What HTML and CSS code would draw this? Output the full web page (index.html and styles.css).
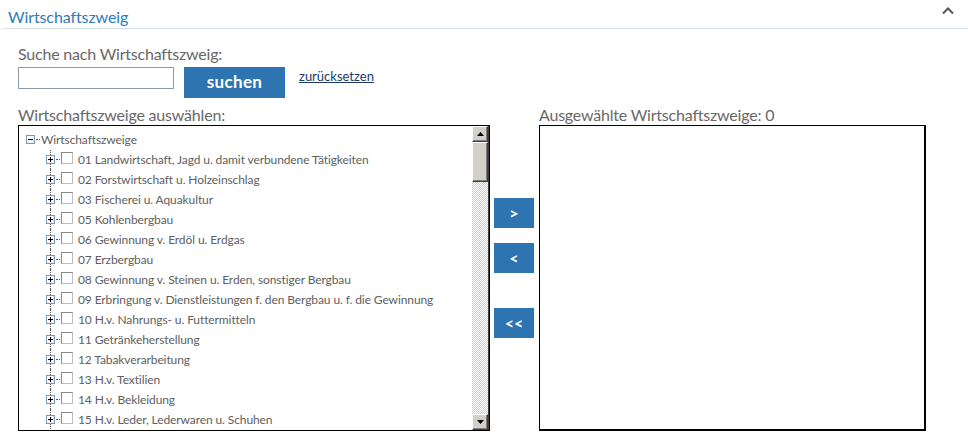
FILE: index.html
```html
<!DOCTYPE html>
<html lang="de">
<head>
<meta charset="utf-8">
<title>Wirtschaftszweig</title>
<link rel="stylesheet" href="styles.css">
</head>
<body>
<section class="panel">
  <header class="panel-head">
    <h2 class="panel-title">Wirtschaftszweig</h2>
    <svg class="chevron" width="14" height="10" viewBox="0 0 14 10"><path d="M2 7.5 L7 2.5 L12 7.5" fill="none" stroke="#555" stroke-width="2"/></svg>
  </header>
  <div class="panel-body">
    <div class="search">
      <label class="lbl" for="q">Suche nach Wirtschaftszweig:</label>
      <div class="search-row">
        <input id="q" class="search-input" type="text">
        <button class="btn-search">suchen</button>
        <a class="reset" href="#">zurücksetzen</a>
      </div>
    </div>
    <div class="chooser">
      <div class="col-left">
        <div class="lbl">Wirtschaftszweige auswählen:</div>
        <div class="treebox">
          <div class="tree">
            <div class="root"><span class="exp minus"></span><span class="hdots"></span><span class="root-text">Wirtschaftszweige</span></div>
            <ul class="items">
              <li><span class="vline"></span><span class="exp plus"></span><span class="hdots"></span><span class="cb"></span><span class="it">01 Landwirtschaft, Jagd u. damit verbundene Tätigkeiten</span></li>
              <li><span class="vline"></span><span class="exp plus"></span><span class="hdots"></span><span class="cb"></span><span class="it">02 Forstwirtschaft u. Holzeinschlag</span></li>
              <li><span class="vline"></span><span class="exp plus"></span><span class="hdots"></span><span class="cb"></span><span class="it">03 Fischerei u. Aquakultur</span></li>
              <li><span class="vline"></span><span class="exp plus"></span><span class="hdots"></span><span class="cb"></span><span class="it">05 Kohlenbergbau</span></li>
              <li><span class="vline"></span><span class="exp plus"></span><span class="hdots"></span><span class="cb"></span><span class="it">06 Gewinnung v. Erdöl u. Erdgas</span></li>
              <li><span class="vline"></span><span class="exp plus"></span><span class="hdots"></span><span class="cb"></span><span class="it">07 Erzbergbau</span></li>
              <li><span class="vline"></span><span class="exp plus"></span><span class="hdots"></span><span class="cb"></span><span class="it">08 Gewinnung v. Steinen u. Erden, sonstiger Bergbau</span></li>
              <li><span class="vline"></span><span class="exp plus"></span><span class="hdots"></span><span class="cb"></span><span class="it">09 Erbringung v. Dienstleistungen f. den Bergbau u. f. die Gewinnung</span></li>
              <li><span class="vline"></span><span class="exp plus"></span><span class="hdots"></span><span class="cb"></span><span class="it">10 H.v. Nahrungs- u. Futtermitteln</span></li>
              <li><span class="vline"></span><span class="exp plus"></span><span class="hdots"></span><span class="cb"></span><span class="it">11 Getränkeherstellung</span></li>
              <li><span class="vline"></span><span class="exp plus"></span><span class="hdots"></span><span class="cb"></span><span class="it">12 Tabakverarbeitung</span></li>
              <li><span class="vline"></span><span class="exp plus"></span><span class="hdots"></span><span class="cb"></span><span class="it">13 H.v. Textilien</span></li>
              <li><span class="vline"></span><span class="exp plus"></span><span class="hdots"></span><span class="cb"></span><span class="it">14 H.v. Bekleidung</span></li>
              <li class="last"><span class="vline"></span><span class="exp plus"></span><span class="hdots"></span><span class="cb"></span><span class="it">15 H.v. Leder, Lederwaren u. Schuhen</span></li>
            </ul>
          </div>
          <div class="sbar">
            <div class="sbtn"><svg width="7" height="4" viewBox="0 0 7 4"><path d="M0 4 L3.5 0 L7 4Z" fill="#000"/></svg></div>
            <div class="sthumb"></div>
            <div class="strack"></div>
            <div class="sbtn"><svg width="7" height="4" viewBox="0 0 7 4"><path d="M0 0 L3.5 4 L7 0Z" fill="#000"/></svg></div>
          </div>
        </div>
      </div>
      <div class="mid">
        <button class="mv mv-add">&gt;</button>
        <button class="mv mv-rem">&lt;</button>
        <button class="mv mv-all">&lt;&lt;</button>
      </div>
      <div class="col-right">
        <div class="lbl">Ausgewählte Wirtschaftszweige: 0</div>
        <div class="selbox"></div>
      </div>
    </div>
  </div>
</section>
</body>
</html>
```

FILE: styles.css
```css
html, body {
  margin: 0;
  padding: 0;
  background: #fff;
  font-family: "Lato", "Open Sans", sans-serif;
}

.panel {
  width: 968px;
  height: 438px;
  overflow: hidden;
}

.panel-head {
  display: flex;
  align-items: center;
  justify-content: space-between;
  height: 29px;
  margin-left: 3px;
  padding-left: 5px;
  padding-right: 13px;
  border-bottom: 1px solid #d5dde5;
  box-sizing: border-box;
}

.panel-title {
  margin: 0;
  font-weight: normal;
  font-size: 16px;
  color: #2f7ab9;
  letter-spacing: -0.1px;
  position: relative;
  top: 2px;
}

.chevron {
  display: block;
  margin-top: -6px;
}

.panel-body {
  padding: 15px 0 0 18px;
}

.lbl {
  font-size: 16px;
  color: #686868;
  line-height: 20px;
  letter-spacing: -0.2px;
  display: block;
}

.search-row {
  display: flex;
  align-items: flex-start;
  margin-top: 3px;
}

.search-input {
  width: 156px;
  height: 22px;
  box-sizing: border-box;
  border: 1px solid #8b9cb1;
  margin: 0;
  padding: 0 3px;
  font: 13px "Lato", sans-serif;
}

.btn-search {
  margin-left: 10px;
  width: 101px;
  height: 31px;
  border: 0;
  background: #2e74b0;
  color: #fff;
  font: bold 17px "Lato", sans-serif;
  letter-spacing: 0.3px;
  padding: 0 0 2px 0;
}

.reset {
  margin-left: 14px;
  margin-top: 1px;
  font: 13px "Lato", sans-serif;
  color: #1b3a6a;
  text-decoration: underline;
}

.chooser {
  display: flex;
  align-items: flex-start;
  margin-top: 7px;
}

.col-left .lbl {
  margin-bottom: 0;
}

.treebox {
  width: 472px;
  height: 306px;
  box-sizing: border-box;
  border: 1px solid #000;
  display: flex;
  overflow: hidden;
}

.tree {
  flex: 1;
  padding: 3px 0 0 7px;
  overflow: hidden;
  color: #606060;
  font-size: 12px;
}

.root {
  display: flex;
  align-items: center;
  height: 20px;
}

.root-text {
  margin-left: 1px;
  letter-spacing: -0.1px;
}

.exp {
  width: 9px;
  height: 9px;
  box-sizing: border-box;
  border: 1px solid #7a99b8;
  background: linear-gradient(135deg, #fff 0%, #e9eef4 100%);
  position: relative;
  flex: none;
}

.exp::before {
  content: "";
  position: absolute;
  left: 1px;
  top: 3px;
  width: 5px;
  height: 1px;
  background: #000;
}

.plus::after {
  content: "";
  position: absolute;
  left: 3px;
  top: 1px;
  width: 1px;
  height: 5px;
  background: #000;
}

.hdots {
  width: 4px;
  height: 0;
  border-top: 1px dotted #555;
  margin-left: 1px;
  flex: none;
}

.items {
  list-style: none;
  margin: 0;
  padding: 0 0 0 20px;
}

.items li {
  display: flex;
  align-items: center;
  height: 20px;
  position: relative;
  white-space: nowrap;
}

.vline {
  position: absolute;
  left: 4px;
  top: 0;
  bottom: 0;
  border-left: 1px dotted #555;
}

.items li:first-child .vline {
  top: 1px;
}

.items li.last .vline {
  bottom: -12px;
}

.items .exp {
  z-index: 1;
}

.cb {
  width: 12px;
  height: 12px;
  box-sizing: border-box;
  border: 1px solid #8a8a8a;
  border-right-color: #bdbdbd;
  border-bottom-color: #bdbdbd;
  background: #fff;
  margin-left: 1px;
  margin-top: -3px;
  flex: none;
}

.it {
  margin-left: 5px;
  letter-spacing: -0.1px;
}

.sbar {
  width: 16px;
  display: flex;
  flex-direction: column;
  flex: none;
  border-right: 1px solid #404040;
}

.sbtn, .sthumb {
  box-sizing: border-box;
  background: #d4d0c8;
  border: 1px solid;
  border-color: #fff #404040 #404040 #fff;
  box-shadow: inset -1px -1px 0 #808080;
  flex: none;
}

.sbtn {
  height: 16px;
  display: flex;
  align-items: center;
  justify-content: center;
}

.sthumb {
  height: 40px;
}

.strack {
  flex: 1;
  background: repeating-conic-gradient(#d4d0c8 0 25%, #fff 0 50%) 0 0 / 2px 2px;
}

.mid {
  display: flex;
  flex-direction: column;
  width: 40px;
  margin-left: 4px;
  margin-right: 5px;
  padding-top: 93px;
}

.mv {
  width: 40px;
  height: 30px;
  border: 0;
  padding: 0 0 2px 0;
  background: #2e74b0;
  color: #fff;
  font: bold 16px "Lato", sans-serif;
}

.mv-rem {
  margin-top: 15px;
}

.mv-all {
  margin-top: 35px;
}

.selbox {
  width: 387px;
  height: 306px;
  box-sizing: border-box;
  border: 1px solid #000;
  border-width: 1px 2px 2px 1px;
}
```
